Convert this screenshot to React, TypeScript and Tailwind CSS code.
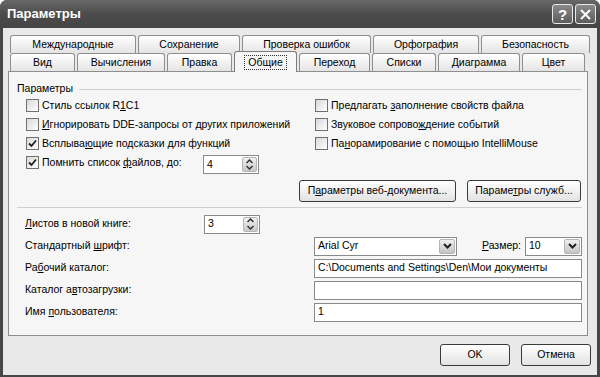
import React from "react";

const panelBg = "bg-[#f6f6f6]";

function Tab({ label, w, selected }: { label: string; w: number; selected?: boolean }) {
  if (selected) {
    return (
      <div
        style={{ width: w }}
        className={`relative z-10 mb-[-1px] flex h-[21px] items-start justify-center rounded-t-[3px] border border-b-0 border-[#7c7c7c] ${panelBg} pt-[3px]`}
      >
        <span className="border border-dotted border-[#333] px-[3px] leading-[13px]">{label}</span>
      </div>
    );
  }
  return (
    <div
      style={{ width: w }}
      className="flex h-[18px] items-center justify-center rounded-t-[3px] border border-b-0 border-[#8e8e8e] bg-gradient-to-b from-white to-[#e4e4e4]"
    >
      {label}
    </div>
  );
}

function Check({ checked }: { checked?: boolean }) {
  return (
    <span className="flex h-[13px] w-[13px] shrink-0 items-center justify-center border border-[#707070] bg-gradient-to-br from-[#d9d9d9] to-white">
      {checked ? (
        <svg width="11" height="11" viewBox="0 0 11 11">
          <path d="M2 5.5 L4.5 8 L9 2.5" fill="none" stroke="#1e1e1e" strokeWidth="1.8" />
        </svg>
      ) : null}
    </span>
  );
}

function CheckRow({ checked, children }: { checked?: boolean; children: React.ReactNode }) {
  return (
    <div className="flex h-[19px] items-center gap-[3px]">
      <Check checked={checked} />
      <span>{children}</span>
    </div>
  );
}

function Spinner({ value }: { value: string }) {
  return (
    <div className="flex h-[19px] w-[56px] items-stretch border border-[#8a8a8a] bg-white">
      <span className="flex flex-1 items-center pl-[3px]">{value}</span>
      <span className="my-[1px] mr-[1px] flex w-[15px] flex-col rounded-[2px] border border-[#b5b5b5] bg-gradient-to-b from-[#f0f0f0] to-[#c9c9c9]">
        <span className="flex flex-1 items-center justify-center">
          <svg width="7" height="5" viewBox="0 0 7 5">
            <path d="M0.5 4 L3.5 1 L6.5 4" fill="none" stroke="#333" strokeWidth="1.5" />
          </svg>
        </span>
        <span className="flex flex-1 items-center justify-center">
          <svg width="7" height="5" viewBox="0 0 7 5">
            <path d="M0.5 1 L3.5 4 L6.5 1" fill="none" stroke="#333" strokeWidth="1.5" />
          </svg>
        </span>
      </span>
    </div>
  );
}

function Combo({ value, w }: { value: string; w: number }) {
  return (
    <div style={{ width: w }} className="flex h-[19px] items-stretch border border-[#8a8a8a] bg-white">
      <span className="flex flex-1 items-center pl-[3px]">{value}</span>
      <span className="m-[1px] flex w-[16px] items-center justify-center rounded-[2px] border border-[#b5b5b5] bg-gradient-to-b from-[#f0f0f0] to-[#c4c4c4]">
        <svg width="9" height="6" viewBox="0 0 9 6">
          <path d="M1 1 L4.5 4.5 L8 1" fill="none" stroke="#222" strokeWidth="2" />
        </svg>
      </span>
    </div>
  );
}

function TextBox({ value }: { value?: string }) {
  return (
    <div className="flex h-[19px] w-[268px] items-center border border-[#8a8a8a] bg-white pl-[3px]">
      {value}
    </div>
  );
}

function Btn({ w, children }: { w: number; children: React.ReactNode }) {
  return (
    <div
      style={{ width: w }}
      className="flex h-[22px] items-center justify-center rounded-[3px] border border-[#3a3a3a] bg-gradient-to-b from-white to-[#e2e2e2]"
    >
      {children}
    </div>
  );
}

function FormRow({ label, children }: { label: React.ReactNode; children?: React.ReactNode }) {
  return (
    <div className="flex h-[22px] items-center">
      <span className="w-[179px]">{label}</span>
      {children}
    </div>
  );
}

export default function App() {
  return (
    <div className="h-[377px] w-[600px] bg-white font-['Liberation_Sans',Arial,sans-serif] text-[10.5px] text-black">
      <div className="flex h-full flex-col rounded-t-[7px] bg-[#474747]">
        {/* title bar */}
        <div className="flex h-[28px] shrink-0 items-center justify-between rounded-t-[7px] bg-gradient-to-b from-[#686868] via-[#4c4c4c] to-[#454545] pl-[7px] pr-[4px]">
          <span className="text-[13px] font-bold text-white">Параметры</span>
          <div className="flex gap-[2px]">
            <span className="flex h-[20px] w-[21px] items-center justify-center rounded-[3px] border border-[#e8e8e8] bg-gradient-to-b from-[#8a8a8a] to-[#5c5c5c] text-[15px] font-bold leading-none text-white">
              ?
            </span>
            <span className="flex h-[20px] w-[21px] items-center justify-center rounded-[3px] border border-[#e8e8e8] bg-gradient-to-b from-[#8a8a8a] to-[#5c5c5c]">
              <svg width="11" height="11" viewBox="0 0 11 11">
                <path d="M1 1 L10 10 M10 1 L1 10" stroke="white" strokeWidth="2" />
              </svg>
            </span>
          </div>
        </div>

        {/* body */}
        <div className="mx-[3px] mb-[2px] flex flex-1 flex-col bg-[#e9e9e9] pl-[5px] pr-[6px] pt-[7px]">
          <div className="flex h-[18px] gap-[2px] pl-[2px]">
            <Tab label="Международные" w={126} />
            <Tab label="Сохранение" w={102} />
            <Tab label="Проверка ошибок" w={129} />
            <Tab label="Орфография" w={106} />
            <Tab label="Безопасность" w={109} />
          </div>
          <div className="relative z-10 flex h-[18px] items-end gap-[2px] pl-[2px]">
            <Tab label="Вид" w={65} />
            <Tab label="Вычисления" w={88} />
            <Tab label="Правка" w={65} />
            <Tab label="Общие" w={63} selected />
            <Tab label="Переход" w={71} />
            <Tab label="Списки" w={64} />
            <Tab label="Диаграмма" w={82} />
            <Tab label="Цвет" w={63} />
          </div>

          <div className={`flex h-[265px] w-[580px] flex-col border border-[#8e8e8e] ${panelBg} pl-[8px] pr-[5px]`}>
            <div className="mt-[10px] flex h-[14px] items-center gap-[6px]">
              <span>Параметры</span>
              <span className="h-px flex-1 bg-[#cfcfcf]" />
            </div>

            <div className="flex pl-[9px]">
              <div className="w-[289px]">
                <CheckRow>
                  Стиль ссылок R<u>1</u>C1
                </CheckRow>
                <CheckRow>
                  <u>И</u>гнорировать DDE-запросы от других приложений
                </CheckRow>
                <CheckRow checked>
                  Всплыва<u>ю</u>щие подсказки для функций
                </CheckRow>
                <div className="flex h-[19px] items-center">
                  <div className="flex w-[177px] items-center gap-[3px]">
                    <Check checked />
                    <span>
                      Помнить список <u>ф</u>айлов, до:
                    </span>
                  </div>
                  <div className="mt-[4px]">
                    <Spinner value="4" />
                  </div>
                </div>
              </div>
              <div>
                <CheckRow>
                  Предлагать <u>з</u>аполнение свойств файла
                </CheckRow>
                <CheckRow>
                  Звуковое сопрово<u>ж</u>дение событий
                </CheckRow>
                <CheckRow>
                  Па<u>н</u>орамирование с помощью IntelliMouse
                </CheckRow>
              </div>
            </div>

            <div className="mt-[8px] flex justify-end gap-[11px] pr-[1px]">
              <Btn w={157}>
                <span>
                  П<u>а</u>раметры веб-документа...
                </span>
              </Btn>
              <Btn w={114}>
                <span>
                  Параме<u>т</u>ры служб...
                </span>
              </Btn>
            </div>

            <div className="mt-[5px] h-px bg-[#cfcfcf]" />

            <div className="mt-[5px] pl-[8px]">
              <FormRow
                label={
                  <>
                    <u>Л</u>истов в новой книге:
                  </>
                }
              >
                <Spinner value="3" />
              </FormRow>
              <FormRow
                label={
                  <>
                    Стандартный <u>ш</u>рифт:
                  </>
                }
              >
                <div className="ml-[110px] flex w-[268px] items-center justify-between">
                  <Combo value="Arial Cyr" w={143} />
                  <div className="flex items-center gap-[4px]">
                    <span>
                      <u>Р</u>азмер:
                    </span>
                    <Combo value="10" w={57} />
                  </div>
                </div>
              </FormRow>
              <FormRow
                label={
                  <>
                    Ра<u>б</u>очий каталог:
                  </>
                }
              >
                <div className="ml-[110px]">
                  <TextBox value="C:\Documents and Settings\Den\Мои документы" />
                </div>
              </FormRow>
              <FormRow
                label={
                  <>
                    Каталог а<u>в</u>тозагрузки:
                  </>
                }
              >
                <div className="ml-[110px]">
                  <TextBox />
                </div>
              </FormRow>
              <FormRow
                label={
                  <>
                    Имя <u>п</u>ользователя:
                  </>
                }
              >
                <div className="ml-[110px]">
                  <TextBox value="1" />
                </div>
              </FormRow>
            </div>
          </div>

          <div className="mt-[8px] flex justify-end gap-[11px]">
            <Btn w={70}>OK</Btn>
            <Btn w={70}>Отмена</Btn>
          </div>
        </div>
      </div>
    </div>
  );
}
